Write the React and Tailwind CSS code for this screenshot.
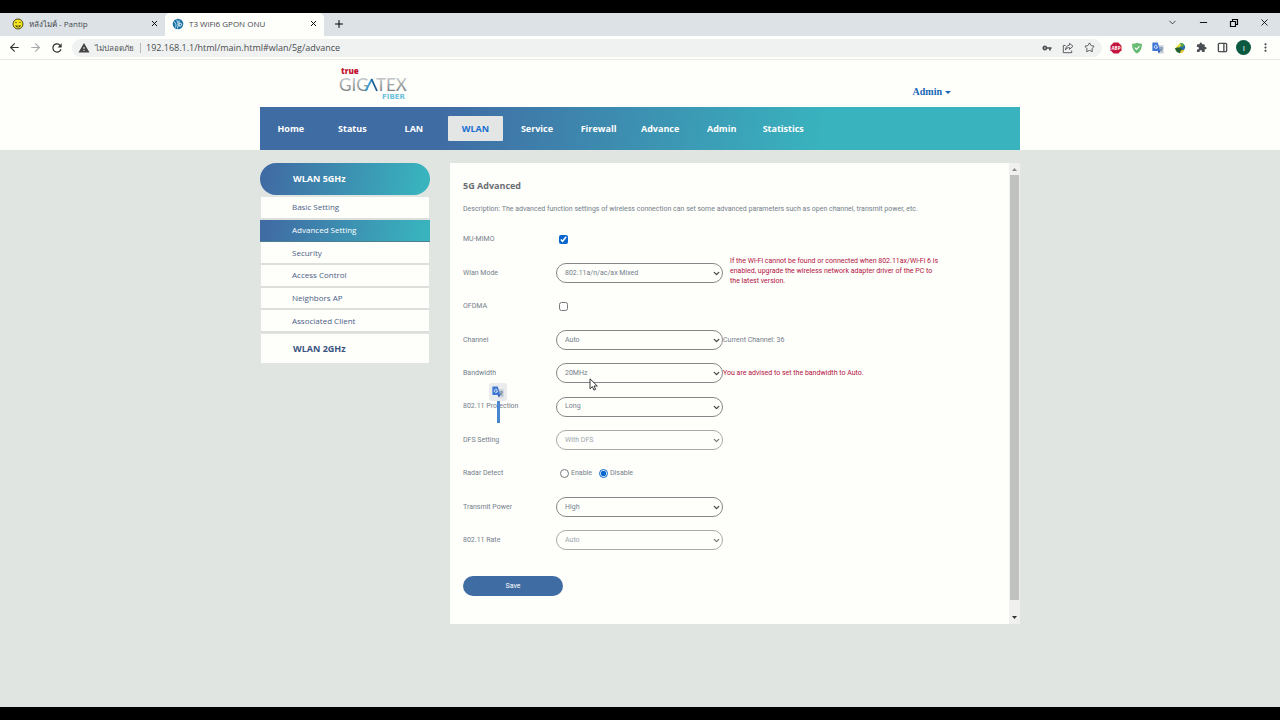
import { ArrowLeft, ArrowRight, ChevronDown, Minus, PanelRight, Plus, Star, X } from "lucide-react";
import { MdExtension, MdMoreVert, MdRefresh, MdVpnKey, MdWarning } from "react-icons/md";

const NAV = ["Home", "Status", "LAN", "WLAN", "Service", "Firewall", "Advance", "Admin", "Statistics"];

const SIDE = [
  "Basic Setting",
  "Advanced Setting",
  "Security",
  "Access Control",
  "Neighbors AP",
  "Associated Client",
];

function PantipIcon() {
  return (
    <svg viewBox="0 0 12 12" className="size-3 shrink-0">
      <circle cx="6" cy="6" r="5" fill="#f6e51c" stroke="#3b3a12" strokeWidth="0.9" />
      <circle cx="4" cy="4.600" r="0.7" fill="#222" />
      <path d="M7 4.800c.4-.7 1.300-.7 1.700 0" stroke="#222" strokeWidth="0.8" fill="none" />
      <path d="M3.200 7.300c1.600.5 3.600.5 5.600 0-.2 1.400-1.400 2.100-2.700 2.100S3.600 8.700 3.200 7.300z" fill="#222" />
      <path d="M5.200 8.300h2" stroke="#f6e51c" strokeWidth="0.8" />
    </svg>
  );
}

function OnuIcon() {
  return (
    <svg viewBox="0 0 12 12" className="size-3 shrink-0">
      <circle cx="6" cy="6" r="5.300" fill="#1b74a8" />
      <path d="M1.500 3.500c2.500 1 3 4 2 6M4 1.500c2 1.500 2.500 5 1.500 9" stroke="#d9eef8" strokeWidth="0.8" fill="none" />
      <path d="M7 2.500v5.800M7 6.200c1-1.500 3-1 2.600.6-.3 1.300-1.900 1.700-2.600.6" stroke="#fff" strokeWidth="0.9" fill="none" />
    </svg>
  );
}

function TranslateIcon() {
  return (
    <svg viewBox="0 0 13 13" className="size-3">
      <path d="M5.500 3.500H12a.6.6 0 0 1 .6.6v7.800a.6.6 0 0 1-.6.6H7.500z" fill="#c9d1dc" />
      <path d="M8 6.500h4M10 5.600v.9M11.300 6.500c-.4 1.700-1.500 2.800-2.800 3.500M8.800 7.500c.5 1.200 1.500 2 2.700 2.500" stroke="#54708f" strokeWidth="0.7" fill="none" />
      <path d="M1 .5h5.200L9 9.800H1a.6.6 0 0 1-.6-.6V1.100A.6.6 0 0 1 1 .5z" fill="#3f78d4" />
      <path d="M6.300 9.800H9l-1.700 2.700z" fill="#2754a8" />
      <path d="M5.600 4.100a1.700 1.700 0 1 0 .4 1.200H4.400" stroke="#fff" strokeWidth="0.8" fill="none" />
    </svg>
  );
}

function AdblockIcon() {
  return (
    <svg viewBox="0 0 12 12" className="size-3">
      <path d="M3.700.5h4.600l3.200 3.200v4.600l-3.200 3.200H3.700L.5 8.300V3.700z" fill="#c4153f" />
      <text x="6" y="7.700" textAnchor="middle" fontSize="4.500" fontWeight="700" fill="#fff">
        ABP
      </text>
    </svg>
  );
}

function ShieldIcon() {
  return (
    <svg viewBox="0 0 12 12" className="size-3">
      <path d="M6 .7c1.600.8 3.200 1 4.900 1.100C11 6 9.800 9.500 6 11.500 2.200 9.500 1 6 1.100 1.800 2.800 1.700 4.400 1.500 6 .7z" fill="#68bb74" />
      <path d="M3.800 5.700l1.700 1.700 3-3.200" stroke="#fff" strokeWidth="1.100" fill="none" />
    </svg>
  );
}

function DownloaderIcon() {
  return (
    <svg viewBox="0 0 12 12" className="size-3">
      <path d="M6.500 1c3 .2 5 2.500 4.600 5L9 9.500 4.500 6z" fill="#2c6aa3" />
      <path d="M6.500 1c1.500 0 3 .6 3.800 1.800L8 5.500 5.500 3z" fill="#58a644" />
      <path d="M.8 6.500L5.500 1.500l1.800 1.700L3.500 7.500z" fill="#e6dc3a" />
      <path d="M.8 6.500L4 5.200l3.500 1.300 1 2.800-2.700 2-3-1.300z" fill="#23602f" />
      <path d="M7 8.200l3.800-.4-3 3.400-1.800-.2z" fill="#e9c534" />
    </svg>
  );
}

function ShareIcon() {
  return (
    <svg viewBox="0 0 12 12" className="size-3" fill="none" stroke="currentColor" strokeWidth="0.9" strokeLinejoin="round">
      <path d="M3.500 3.500H1.300v7.200h8.400V8.500" />
      <path d="M7.500 1.300l3.500 3-3.500 3V5.600C5.500 5.500 4.200 6.300 3.400 8c.2-2.700 1.600-4.600 4.100-4.900z" />
    </svg>
  );
}

function RestoreIcon() {
  return (
    <svg viewBox="0 0 10 10" className="size-[10px]" fill="none" stroke="currentColor" strokeWidth="1.200">
      <path d="M1.500 3.500h5v5h-5z" />
      <path d="M3.500 3.500v-2h5v5h-2" />
    </svg>
  );
}

function TitleBar() {
  return (
    <div className="flex h-[23px] bg-[#dde2e6] text-[8px] text-[#45494d]">
      <div className="flex w-[165px] items-center pb-[2px] pl-3">
        <PantipIcon />
        <span className="ml-[5px] flex-1">หลังไมค์ - Pantip</span>
        <button aria-label="Close tab" className="mr-[6px]">
          <X className="size-[9px] text-black" strokeWidth={2.5} />
        </button>
      </div>
      <div className="flex w-[159px] items-center rounded-t-[5px] bg-[#fefefb] pb-[2px] pl-[7px]">
        <OnuIcon />
        <span className="ml-[5px] flex-1">T3 WiFi6 GPON ONU</span>
        <button aria-label="Close tab" className="mr-[6px]">
          <X className="size-[9px] text-black" strokeWidth={2.5} />
        </button>
      </div>
      <button aria-label="New tab" className="ml-[9px] pb-[2px]">
        <Plus className="size-3 text-black" />
      </button>
      <div className="ml-auto grid w-[123px] grid-cols-4 place-items-center pb-1 text-black">
        <button aria-label="Search tabs">
          <ChevronDown className="size-[11px]" strokeWidth={1.5} />
        </button>
        <button aria-label="Minimize">
          <Minus className="size-[11px]" />
        </button>
        <button aria-label="Restore">
          <RestoreIcon />
        </button>
        <button aria-label="Close">
          <X className="size-[11px]" strokeWidth={1.8} />
        </button>
      </div>
    </div>
  );
}

function Toolbar() {
  return (
    <div className="flex h-6 items-center border-b border-[#e6e9e7] bg-[#fefefb] pr-1 text-[#4b4f53]">
      <div className="ml-1 grid w-[63px] shrink-0 grid-cols-3 place-items-center">
        <button aria-label="Back">
          <ArrowLeft className="size-[13px] text-[#333]" />
        </button>
        <button aria-label="Forward">
          <ArrowRight className="size-[13px] text-[#a5a8aa]" />
        </button>
        <button aria-label="Reload">
          <MdRefresh className="size-[14px] text-[#333]" />
        </button>
      </div>
      <div className="ml-[5px] flex h-[18px] flex-1 items-center rounded-full bg-[#f0f2f1] pl-[6px]">
        <MdWarning className="size-3 shrink-0 text-[#444]" />
        <span className="ml-[5px] w-[40px] text-[8px] whitespace-nowrap">ไม่ปลอดภัย</span>
        <span className="mx-[5px] h-[10px] w-px bg-[#b5b8ba]" />
        <input
          aria-label="Address"
          defaultValue="192.168.1.1/html/main.html#wlan/5g/advance"
          className="min-w-0 flex-1 bg-transparent text-[9px] text-[#4a4d50] outline-none"
        />
        <div className="mr-[2px] grid w-[64px] shrink-0 grid-cols-3 place-items-center">
          <button aria-label="Passwords">
            <MdVpnKey className="size-[10px]" />
          </button>
          <button aria-label="Share">
            <ShareIcon />
          </button>
          <button aria-label="Bookmark">
            <Star className="size-[11px]" />
          </button>
        </div>
      </div>
      <div className="ml-[3px] grid w-[171px] shrink-0 grid-cols-8 place-items-center">
        <button aria-label="Adblock">
          <AdblockIcon />
        </button>
        <button aria-label="Protection">
          <ShieldIcon />
        </button>
        <button aria-label="Translate">
          <TranslateIcon />
        </button>
        <button aria-label="Downloads">
          <DownloaderIcon />
        </button>
        <button aria-label="Extensions">
          <MdExtension className="size-[11px]" />
        </button>
        <button aria-label="Side panel">
          <PanelRight className="size-[11px]" strokeWidth={3} />
        </button>
        <button
          aria-label="Profile"
          className="flex size-[15px] items-center justify-center rounded-full bg-[#0b5a41] text-[8px] text-white"
        >
          I
        </button>
        <button aria-label="Menu">
          <MdMoreVert className="size-[13px]" />
        </button>
      </div>
    </div>
  );
}

function Logo() {
  return (
    <svg viewBox="0 0 70 34" className="h-[34px] w-[70px]" role="img" aria-label="true Gigatex Fiber">
      <defs>
        <linearGradient id="steel" x1="0" y1="0" x2="0" y2="1">
          <stop offset="0.200" stopColor="#c3c7c9" />
          <stop offset="1" stopColor="#666c70" />
        </linearGradient>
      </defs>
      <text x="2" y="8" fontFamily="Open Sans" fontSize="8" fontWeight="800" fill="#c3102f">
        true
      </text>
      <g fontFamily="Lato" fontSize="17" fill="url(#steel)">
        <text x="0" y="25">
          GIG
        </text>
        <text x="37" y="25">
          TEX
        </text>
      </g>
      <path d="M26.500 25L33 13" stroke="#3c9fd0" strokeWidth="1.800" fill="none" />
      <path d="M32.500 13L38 25" stroke="#1f5f93" strokeWidth="1.800" fill="none" />
      <text x="43" y="33" fontFamily="DejaVu Sans" fontSize="7" fontWeight="700" fill="#6cc1dd">
        FIBER
      </text>
    </svg>
  );
}

function Sidebar() {
  return (
    <aside className="w-[170px] shrink-0 text-[#4c6186]">
      <a
        href="#wlan/5g"
        className="flex h-8 items-center rounded-full bg-[linear-gradient(100deg,#406ca4_5%,#39b3be_95%)] pl-[33px] text-[9px] font-bold text-white"
      >
        WLAN 5GHz
      </a>
      <ul className="mt-[2px] grid h-[136px] grid-rows-6 text-[8px]">
        {SIDE.map((item) =>
          item === "Advanced Setting" ? (
            <li key={item} className="flex">
              <a
                href="#wlan/5g/advance"
                className="flex flex-1 items-center border-b border-[#4d7f93] bg-[linear-gradient(100deg,#406ca4_5%,#39b3be_95%)] pl-8 text-white"
              >
                {item}
              </a>
            </li>
          ) : (
            <li key={item} className="mx-px flex border-b-2 border-[#dcdfdc] bg-[#fefefb]">
              <a href="#wlan/5g" className="flex flex-1 items-center pl-[31px]">
                {item}
              </a>
            </li>
          )
        )}
      </ul>
      <a
        href="#wlan/2g"
        className="mx-px mt-px flex h-[29px] items-center bg-[#fefefb] pl-8 text-[9px] font-bold text-[#3a5480]"
      >
        WLAN 2GHz
      </a>
    </aside>
  );
}

function Row({ label, id, overlay, children }) {
  return (
    <div className="flex items-center">
      <div className="relative w-[93px] shrink-0">
        <label htmlFor={id}>{label}</label>
        {overlay}
      </div>
      {children}
    </div>
  );
}

function Select({ id, value, disabled, children }) {
  return (
    <div className={disabled ? "relative w-[167px] shrink-0 opacity-70" : "relative w-[167px] shrink-0"}>
      <select
        id={id}
        disabled={disabled}
        className="block h-[20px] w-full appearance-none rounded-full border border-[#85888a] bg-[#fefefb] px-2 outline-none"
      >
        <option>{value}</option>
      </select>
      <ChevronDown
        className="pointer-events-none absolute top-[6px] right-[2px] size-[9px] text-[#444]"
        strokeWidth={3.5}
      />
      {children}
    </div>
  );
}

function Cursor() {
  return (
    <svg viewBox="0 0 9 13" className="pointer-events-none absolute top-[15px] left-[33px] h-[13px] w-[9px]">
      <path d="M1 .8v10l2.400-2.200 1.500 3.500 1.700-.7-1.500-3.400h3.200z" fill="#fff" stroke="#222" strokeWidth="0.9" />
    </svg>
  );
}

function TranslatePopup() {
  return (
    <div className="absolute -top-[18px] left-[26px] flex w-[18px] flex-col items-center">
      <button aria-label="Translate selection" className="flex size-[18px] items-center justify-center rounded-[3px] bg-[#e9ebec]">
        <TranslateIcon />
      </button>
      <span className="h-[22px] w-[3px] bg-[#4a86d0]" />
    </div>
  );
}

function ScrollRail() {
  return (
    <div className="flex w-[11px] shrink-0 flex-col items-center bg-[#f0f1ef]">
      <svg viewBox="0 0 11 12" className="h-3 w-[11px]">
        <path d="M3 8l2.500-3L8 8z" fill="#8b8d8c" />
      </svg>
      <span className="w-[9px] flex-1 bg-[#c0c2c0]" />
      <svg viewBox="0 0 11 24" className="h-6 w-[11px]">
        <path d="M3 16l2.500 3L8 16z" fill="#333" />
      </svg>
    </div>
  );
}

function AdvancedForm() {
  return (
    <form
      className="flex-1 px-[13px] pt-4 pb-7 font-['Roboto','Open_Sans',sans-serif] text-[7px] text-[#74808a]"
      onSubmit={(e) => e.preventDefault()}
    >
      <h1 className="font-['Open_Sans',sans-serif] text-[9px] leading-[14px] font-bold text-[#6b6e72]">5G Advanced</h1>
      <p className="mt-[11px] leading-[10px]">
        Description: The advanced function settings of wireless connection can set some advanced parameters such as
        open channel, transmit power, etc.
      </p>
      <div className="mt-[9px] grid h-[334px] grid-rows-10">
        <Row label="MU-MIMO" id="mimo">
          <input id="mimo" type="checkbox" defaultChecked className="ml-[3px] size-[9px] accent-[#0a66cf]" />
        </Row>
        <Row label="Wlan Mode" id="mode">
          <Select id="mode" value="802.11a/n/ac/ax Mixed" />
          <p className="ml-[7px] w-[210px] pb-1 leading-[10px] text-[#b3123f]">
            If the Wi-Fi cannot be found or connected when 802.11ax/Wi-Fi 6 is enabled, upgrade the wireless network
            adapter driver of the PC to the latest version.
          </p>
        </Row>
        <Row label="OFDMA" id="ofdma">
          <input id="ofdma" type="checkbox" className="ml-[3px] size-[9px]" />
        </Row>
        <Row label="Channel" id="channel">
          <Select id="channel" value="Auto" />
          <span>Current Channel: 36</span>
        </Row>
        <Row label="Bandwidth" id="bandwidth">
          <Select id="bandwidth" value="20MHz">
            <Cursor />
          </Select>
          <span className="text-[#b3123f]">You are advised to set the bandwidth to Auto.</span>
        </Row>
        <Row label="802.11 Protection" id="protection" overlay={<TranslatePopup />}>
          <Select id="protection" value="Long" />
        </Row>
        <Row label="DFS Setting" id="dfs">
          <Select id="dfs" value="With DFS" disabled />
        </Row>
        <Row label="Radar Detect" id="radar-on">
          <input id="radar-on" name="radar" type="radio" className="ml-1 size-[9px]" />
          <label htmlFor="radar-on" className="ml-[2px] w-[28px]">
            Enable
          </label>
          <input id="radar-off" name="radar" type="radio" defaultChecked className="size-[9px] accent-[#0a66cf]" />
          <label htmlFor="radar-off" className="ml-[2px]">
            Disable
          </label>
        </Row>
        <Row label="Transmit Power" id="power">
          <Select id="power" value="High" />
        </Row>
        <Row label="802.11 Rate" id="rate">
          <Select id="rate" value="Auto" disabled />
        </Row>
      </div>
      <button type="submit" className="mt-[19px] h-[20px] w-[100px] rounded-full bg-[#406ca4] text-white">
        Save
      </button>
    </form>
  );
}

export default function App() {
  return (
    <div className="flex min-h-screen flex-col border-y-[13px] border-black bg-[#e1e5e1] font-['Open_Sans','Noto_Sans',sans-serif]">
      <TitleBar />
      <Toolbar />
      <header className="bg-[#fefefb]">
        <div className="mx-auto max-w-[760px]">
          <div className="flex h-[47px] items-start justify-between pr-[69px] pl-[79px]">
            <div className="pt-[6px]">
              <Logo />
            </div>
            <button className="mt-[25px] flex items-center gap-[3px] font-['Liberation_Serif',serif] text-[10px] leading-[14px] font-bold text-[#1767b5]">
              Admin
              <span className="border-x-[3px] border-t-[3px] border-x-transparent border-t-[#1767b5]" />
            </button>
          </div>
          <nav className="flex h-[43px] items-center bg-[linear-gradient(100deg,#406ca4_24%,#39b3be_74%)] text-[9px] font-bold text-white">
            <div className="grid w-[554px] grid-cols-9">
              {NAV.map((item) => (
                <a
                  key={item}
                  href={"#" + item.toLowerCase()}
                  className={
                    item === "WLAN"
                      ? "mx-[3px] flex h-[25px] items-center justify-center rounded-[1px] bg-[#e3e6e4] text-[#1a6fd0]"
                      : "flex h-[25px] items-center justify-center"
                  }
                >
                  {item}
                </a>
              ))}
            </div>
          </nav>
        </div>
      </header>
      <main className="mx-auto flex w-full max-w-[760px] flex-1 items-start gap-5 pt-[13px]">
        <Sidebar />
        <section className="flex flex-1 bg-[#fefefb]">
          <AdvancedForm />
          <ScrollRail />
        </section>
      </main>
    </div>
  );
}
